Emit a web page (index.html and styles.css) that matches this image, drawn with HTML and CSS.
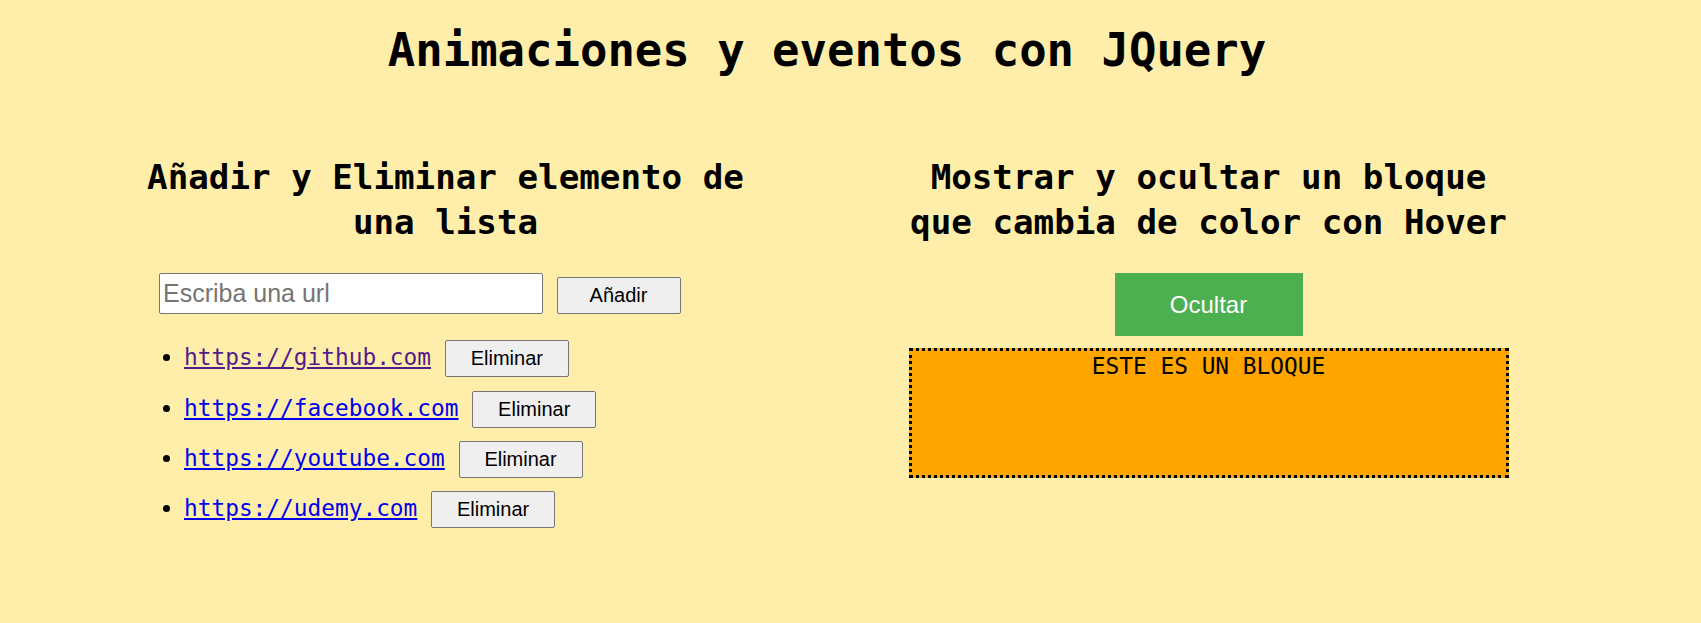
FILE: index.html
```html
<!DOCTYPE html>
<html lang="es">
<head>
<meta charset="utf-8">
<title>Animaciones y eventos con JQuery</title>
<link rel="stylesheet" href="styles.css">
</head>
<body>
<div class="page">
  <h1 class="title">Animaciones y eventos con JQuery</h1>
  <div class="columns">
    <section class="col">
      <h2 class="col-title">Añadir y Eliminar elemento de una lista</h2>
      <div class="add-form">
        <input class="url-input" type="text" placeholder="Escriba una url">
        <button class="btn">Añadir</button>
      </div>
      <ul class="links">
        <li class="link-item"><a class="link visited" href="#">https://github.com</a> <button class="btn">Eliminar</button></li>
        <li class="link-item"><a class="link" href="#">https://facebook.com</a> <button class="btn">Eliminar</button></li>
        <li class="link-item"><a class="link" href="#">https://youtube.com</a> <button class="btn">Eliminar</button></li>
        <li class="link-item"><a class="link" href="#">https://udemy.com</a> <button class="btn">Eliminar</button></li>
      </ul>
    </section>
    <section class="col col-right">
      <h2 class="col-title">Mostrar y ocultar un bloque que cambia de color con Hover</h2>
      <button class="toggle">Ocultar</button>
      <div class="block">ESTE ES UN BLOQUE</div>
    </section>
  </div>
</div>
</body>
</html>
```
FILE: styles.css
```css
html, body {
  background: #ffeeaa;
}
body {
  margin: 8px;
  font-family: "DejaVu Sans Mono", monospace;
  font-size: 22.8px;
  color: #000;
}
.page {
  padding-right: 47px;
}
.title {
  margin: 16px 0 0;
  font-size: 2em;
  font-weight: bold;
  text-align: center;
}
.columns {
  display: flex;
  justify-content: center;
  gap: 163px;
  margin-top: 78.3px;
}
.col {
  width: 600px;
  flex: none;
}
.col-title {
  margin: 0;
  font-size: 1.5em;
  line-height: 1.3;
  font-weight: bold;
  text-align: center;
}
.add-form {
  display: flex;
  align-items: flex-end;
  gap: 13.5px;
  margin-top: 29px;
  padding-left: 13.5px;
}
.url-input {
  box-sizing: border-box;
  width: 384px;
  height: 41px;
  margin: 0;
  padding: 1px 3px;
  border: 1px solid #767676;
  border-radius: 2px;
  background: #fff;
  font-family: "Liberation Sans", Arial, sans-serif;
  font-size: 25px;
  color: #000;
}
.url-input::placeholder {
  color: #757575;
}
.btn {
  box-sizing: border-box;
  width: 124px;
  height: 37px;
  margin: 0;
  padding: 0;
  border: 1px solid #767676;
  border-radius: 2px;
  background: #efefef;
  font-family: "Liberation Sans", Arial, sans-serif;
  font-size: 20px;
  color: #000;
}
.links {
  margin: 26px 0 0;
  padding-left: 38.5px;
}
.link-item {
  margin-bottom: 13.4px;
}
.link {
  color: #0000ee;
  text-decoration: underline;
}
.link.visited {
  color: #551a8b;
}
.col-right {
  display: flex;
  flex-direction: column;
  align-items: center;
}
.toggle {
  width: 188px;
  height: 63px;
  margin-top: 29px;
  border: none;
  background: #4caf50;
  color: #fff;
  font-family: "Liberation Sans", Arial, sans-serif;
  font-size: 24px;
}
.block {
  box-sizing: border-box;
  width: 600px;
  height: 130px;
  margin-top: 11.5px;
  padding-top: 2px;
  border: 3px dotted #000;
  background: #ffa500;
  text-align: center;
}
```
